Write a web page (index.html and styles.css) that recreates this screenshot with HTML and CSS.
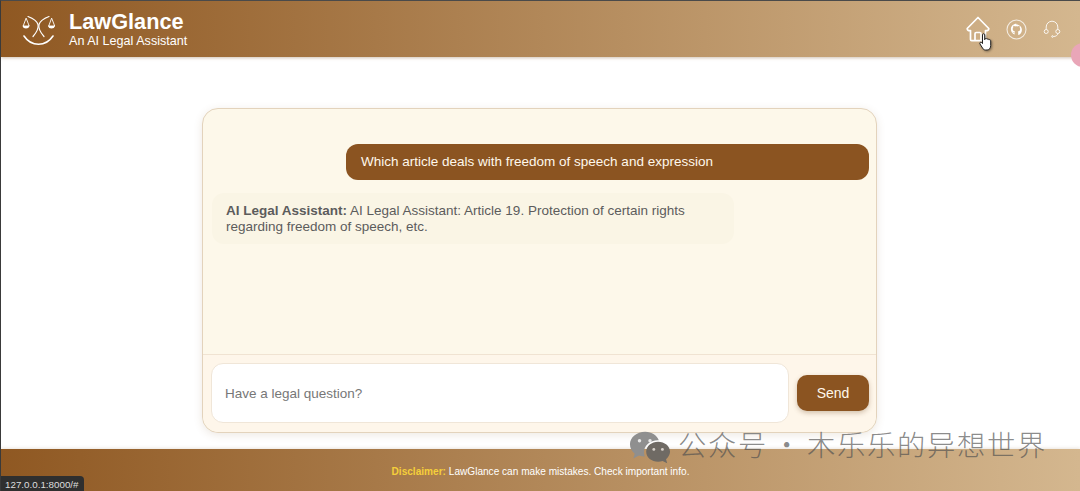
FILE: index.html
```html
<!DOCTYPE html>
<html>
<head>
    <meta charset="utf-8">
    <title>LawGlance</title>
    <link rel="stylesheet" href="styles.css">
</head>
<body>
    <header class="topbar">
        <div class="brand">
            <svg class="logo" width="34" height="31" viewBox="0 0 34 31" fill="none" stroke="#fff" stroke-width="1.2" stroke-linecap="round">
                <path d="M6 1.500c5 2 9 4.500 10 8 1 4-2 8.500-5 12"/>
                <path d="M27 1.500c-5 2-9 4.500-10 8-1 4 2 8.500 5 12"/>
                <path d="M4 3.500 1.200 11h5.600zM29.500 3.500 26.700 11h5.600z" stroke-width=".9"/>
                <path d="M1.200 11c.6 2.600 5 2.600 5.600 0M26.700 11c.6 2.600 5 2.600 5.600 0" fill="#fff"/>
                <path d="M2 21c4 6 10 8.300 14.500 8.300S27 27 31 21" stroke-width="1.600"/>
            </svg>
            <div class="brand-text">
                <div class="brand-name">LawGlance</div>
                <div class="brand-sub">An AI Legal Assistant</div>
            </div>
        </div>
        <nav class="nav-icons">
            <svg width="24" height="27" viewBox="0 0 24 27" fill="none" stroke="#fff" stroke-width="1.700" stroke-linejoin="round">
                <path d="M12 1.500 1.200 12.500c0 1.500 1 2.400 3.300 2v9c0 .8.500 1.200 1.200 1.200h12.600c.7 0 1.200-.4 1.200-1.200v-9c2.300.4 3.300-.5 3.300-2z"/>
                <path d="M9 24.700v-7c0-.8.500-1.200 1.200-1.200h3.600c.7 0 1.200.4 1.200 1.200v7"/>
            </svg>
            <svg width="21" height="21" viewBox="0 0 21 21" fill="none">
                <circle cx="10.500" cy="10.500" r="9.500" stroke="#fff" stroke-opacity=".75" stroke-width="1.100"/>
                <path d="M10.500 4.800c-3.200 0-5.600 2.400-5.600 5.500 0 2.400 1.500 4.400 3.700 5.200v-1.700c-1.200.3-1.800-.4-2.100-1.100 1 .1 1.200 1 2.200.9 0-.5.200-.8.400-1-1.400-.3-2.400-1-2.400-2.600 0-.7.200-1.200.6-1.700-.1-.5-.1-1 .1-1.500.7 0 1.200.3 1.600.6.900-.2 2-.2 2.900 0 .4-.3.900-.6 1.600-.6.200.5.200 1 .1 1.500.4.500.6 1 .6 1.700 0 1.600-1 2.300-2.400 2.600.3.300.4.700.4 1.200v2.300c2.200-.8 3.700-2.800 3.700-5.200 0-3.100-2.400-5.500-5.600-5.500z" fill="#fff"/>
            </svg>
            <svg width="18" height="18" viewBox="0 0 18 18" fill="none" stroke="#fff" stroke-opacity=".85" stroke-width="1">
                <path d="M3.200 9.500V7a5.800 5.800 0 0 1 11.600 0v2.500"/>
                <circle cx="3.200" cy="11.500" r="2"/>
                <circle cx="14.800" cy="11.500" r="2"/>
                <path d="M14.800 13.500c0 1.800-2 3-4.300 3"/>
                <circle cx="9.500" cy="16.500" r=".8"/>
            </svg>
        </nav>
    </header>

    <main class="page">
        <section class="chat">
            <div class="messages">
                <div class="msg-user">Which article deals with freedom of speech and expression</div>
                <div class="msg-bot"><strong>AI Legal Assistant:</strong> AI Legal Assistant: Article 19. Protection of certain rights regarding freedom of speech, etc.</div>
            </div>
            <div class="composer">
                <input class="question" type="text" placeholder="Have a legal question?">
                <button class="send">Send</button>
            </div>
        </section>
    </main>

    <footer class="bottombar">
        <p><span class="warn">Disclaimer:</span> LawGlance can make mistakes. Check important info.</p>
    </footer>

    <!-- things sitting on top of the page -->
    <div class="status-link">127.0.0.1:8000/#</div>
    <div class="pink-dot"></div>
    <svg class="cursor" width="14" height="19" viewBox="0 0 14 19">
        <path d="M3.500 1.800c0-1.400 2.200-1.400 2.200 0v5l.3-1c.8-.6 1.800-.3 2 .4.700-.5 1.700-.2 1.900.6.800-.4 1.800 0 1.800 1v4.700c0 2.200-1.200 4.500-3.500 4.500H6.500c-1.500 0-2.200-.7-3-2L1 11c-.8-1.300.7-2.400 1.700-1.400l.8 1z" fill="#fff" stroke="#222" stroke-width="1"/>
    </svg>
    <div class="watermark">
        <svg width="42" height="34" viewBox="0 0 44 34">
            <path d="M17 1C8 1 1 7 1 14c0 4 2 7 5 10l-1.500 5 6-3c2 .6 4 .9 6 .9-.5-1.500-.8-3-.8-4.400 0-7 6.500-12.500 14.500-12.500h1C29.500 5 24 1 17 1z" fill="#8f8f8f"/>
            <path d="M43 22c0-6-5.800-10.500-12.500-10.500S18 16 18 22s5.800 10.500 12.500 10.500c1.600 0 3.200-.3 4.700-.8l4.800 2.300-1.200-4.200C41 27.900 43 25 43 22z" fill="#6f6a64"/>
            <circle cx="11" cy="10.500" r="1.800" fill="#e8e8e8"/>
            <circle cx="22" cy="10.500" r="1.800" fill="#e8e8e8"/>
            <circle cx="26" cy="19.500" r="1.500" fill="#d8d2cc"/>
            <circle cx="35" cy="19.500" r="1.500" fill="#d8d2cc"/>
        </svg>
        <span class="wm-text">公众号<span class="wm-dot">·</span>木乐乐的异想世界</span>
    </div>
</body>
</html>
```

FILE: styles.css
```css
* {
    box-sizing: border-box;
}

body {
    margin: 0;
    height: 491px;
    overflow: hidden;
    display: flex;
    flex-direction: column;
    background: #fff;
    border-top: 1px solid #4a4a4a;
    border-left: 1px solid #3a3a3a;
    font-family: "Liberation Sans", Arial, sans-serif;
}

.topbar {
    height: 56px;
    flex: none;
    display: flex;
    align-items: center;
    justify-content: space-between;
    padding: 0 19px 0 21px;
    background: linear-gradient(90deg, #8f5822 0%, #d4b78f 100%);
    box-shadow: 0 1px 3px rgba(120, 80, 40, 0.35);
}

.brand {
    display: flex;
    align-items: center;
    gap: 13px;
}

.logo {
    margin-top: 2px;
}

.brand-text {
    color: #fff;
}

.brand-name {
    font-size: 21.700px;
    font-weight: bold;
    line-height: 24px;
}

.brand-sub {
    font-size: 12.600px;
    line-height: 14px;
}

.nav-icons {
    display: flex;
    align-items: center;
    gap: 16px;
}

.page {
    flex: 1;
    display: flex;
    justify-content: center;
    align-items: flex-start;
    padding: 51px 2px 0 0;
}

.chat {
    width: 675px;
    height: 325px;
    display: flex;
    flex-direction: column;
    background: #fdf8ea;
    border: 1px solid #e3d3bc;
    border-radius: 16px;
    box-shadow: 0 2px 8px rgba(130, 90, 50, 0.14);
}

.messages {
    flex: 1;
    display: flex;
    flex-direction: column;
    padding: 35px 7px 0 9px;
    font-size: 13.500px;
    line-height: 16px;
}

.msg-user {
    align-self: flex-end;
    width: 523px;
    height: 36px;
    padding: 10px 15px;
    color: #fff8ec;
    background: #8b5421;
    border-radius: 12px;
}

.msg-bot {
    width: 522px;
    margin-top: 13px;
    padding: 10px 14px 9px;
    color: #5c5c5c;
    background: #faf5e5;
    border-radius: 12px;
}

.composer {
    height: 78px;
    flex: none;
    display: flex;
    align-items: center;
    gap: 8px;
    padding: 0 7px 2px 8px;
    background: #fef6ea;
    border-top: 1px solid #f0e3d2;
    border-radius: 0 0 16px 16px;
}

.question {
    width: 578px;
    height: 60px;
    padding: 2px 13px 0;
    font: 13.500px "Liberation Sans", Arial, sans-serif;
    background: #fff;
    border: 1px solid #f0e6d8;
    border-radius: 12px;
}

.question::placeholder {
    color: #777;
}

.send {
    width: 72px;
    height: 36px;
    font: 14px "Liberation Sans", Arial, sans-serif;
    color: #fff8ec;
    background: #8b5421;
    border: none;
    border-radius: 10px;
    box-shadow: 0 2px 5px rgba(110, 70, 30, 0.3);
}

.bottombar {
    height: 42px;
    flex: none;
    display: flex;
    align-items: center;
    justify-content: center;
    background: linear-gradient(90deg, #8f5822 0%, #d4b78f 100%);
    box-shadow: 0 -1px 3px rgba(120, 80, 40, 0.15);
    color: #fff;
    font-size: 10.100px;
}

.bottombar p {
    margin: 3px 0 0;
}

.warn {
    color: #f5cf3a;
    font-weight: bold;
}

.status-link {
    position: absolute;
    left: 1px;
    bottom: 0;
    height: 15px;
    width: 83px;
    padding: 3px 0 0 4px;
    color: #ddd;
    background: #2f2f2f;
    border-radius: 0 4px 0 0;
    font-size: 9.800px;
    line-height: 12px;
}

.pink-dot {
    position: absolute;
    left: 1071px;
    top: 43px;
    width: 24px;
    height: 24px;
    background: #e9a6b8;
    border-radius: 50%;
}

.cursor {
    position: absolute;
    left: 979px;
    top: 33px;
    filter: drop-shadow(1px 1px 1px rgba(0, 0, 0, 0.4));
}

.watermark {
    position: absolute;
    left: 629px;
    top: 430px;
    display: flex;
    align-items: flex-start;
    gap: 7px;
    color: rgba(80, 80, 80, 0.68);
    font-family: "Noto Sans CJK SC", sans-serif;
    font-size: 28.300px;
    font-weight: 300;
    letter-spacing: 1.700px;
    white-space: nowrap;
}

.wm-text {
    line-height: 34px;
    margin-top: -3px;
}

.wm-dot {
    margin: 0 4.500px;
}
```
